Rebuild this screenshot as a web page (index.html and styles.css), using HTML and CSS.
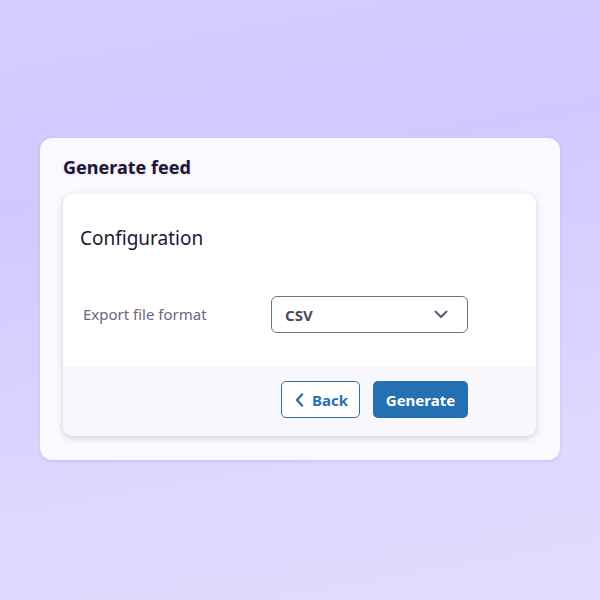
FILE: index.html
```html
<!DOCTYPE html>
<html>
<head>
<meta charset="utf-8">
<link rel="stylesheet" href="styles.css">
</head>
<body>
<div class="page">
  <div class="dialog">
    <h1 class="title">Generate feed</h1>
    <div class="card">
      <div class="card-body">
        <h2 class="section">Configuration</h2>
        <div class="row">
          <label class="label">Export file format</label>
          <div class="select">
            <span class="select-value">CSV</span>
            <svg class="chev" width="14" height="9" viewBox="0 0 14 9"><path d="M1.5 1.5 L7 7 L12.5 1.5" fill="none" stroke="#5f5a70" stroke-width="2" stroke-linecap="round" stroke-linejoin="round"/></svg>
          </div>
        </div>
      </div>
      <div class="card-footer">
        <button class="btn btn-outline"><svg width="9" height="14" viewBox="0 0 9 14"><path d="M7 1.5 L2 7 L7 12.5" fill="none" stroke="#2470b3" stroke-width="2.4" stroke-linecap="round" stroke-linejoin="round"/></svg><span>Back</span></button>
        <button class="btn btn-primary">Generate</button>
      </div>
    </div>
  </div>
</div>
</body>
</html>
```

FILE: styles.css
```css
* { box-sizing: border-box; }
html, body { margin: 0; padding: 0; }
body {
  width: 600px;
  height: 600px;
  font-family: "Noto Sans", "Open Sans", sans-serif;
  background: linear-gradient(170deg, #d6ccff 0%, #d3c8fe 30%, #e0d9ff 80%, #e1dbff 100%);
}
.page {
  padding: 138px 40px 0 40px;
}
.dialog {
  width: 520px;
  height: 322px;
  background: #faf9ff;
  border-radius: 12px;
  box-shadow: 0 1px 3px rgba(120, 100, 190, 0.25);
  padding: 16px 24px 0 23px;
}
.title {
  margin: 0;
  font-size: 18px;
  line-height: 26px;
  font-weight: 700;
  color: #1e1535;
  text-shadow: 0 1px 3px rgba(60, 40, 100, 0.12);
}
.card {
  margin-top: 14px;
  background: #ffffff;
  border-radius: 10px;
  box-shadow: 0 2px 6px rgba(60, 50, 100, 0.22);
  overflow: hidden;
}
.card-body {
  padding: 31px 17px 34px 17px;
}
.section {
  margin: 0;
  font-size: 19px;
  line-height: 26px;
  font-weight: 400;
  color: #1e1535;
}
.row {
  display: flex;
  align-items: center;
  margin-top: 45px;
  padding-left: 3px;
}
.label {
  width: 188px;
  font-size: 15px;
  line-height: 20px;
  margin-top: -2px;
  color: #6c6482;
}
.select {
  width: 197px;
  height: 37px;
  border: 1.5px solid #716c84;
  border-radius: 6px;
  display: flex;
  align-items: center;
  justify-content: space-between;
  padding: 0 19px 0 13px;
}
.select-value {
  font-size: 15px;
  font-weight: 700;
  color: #4e4762;
}
.card-footer {
  background: #f8f7fc;
  height: 69px;
  display: flex;
  justify-content: flex-end;
  align-items: flex-start;
  gap: 13px;
  padding: 14px 68px 0 0;
}
.btn {
  height: 37px;
  border-radius: 5px;
  font-family: "Noto Sans", "Open Sans", sans-serif;
  font-size: 15px;
  font-weight: 700;
  display: flex;
  align-items: center;
  justify-content: center;
  gap: 8px;
  cursor: pointer;
}
.btn-outline {
  width: 79px;
  background: #ffffff;
  border: 1.5px solid #2470b3;
  color: #2470b3;
  padding: 0 0 0 2px;
}
.btn-primary {
  width: 95px;
  background: #2470b3;
  border: none;
  color: #ffffff;
}
```
